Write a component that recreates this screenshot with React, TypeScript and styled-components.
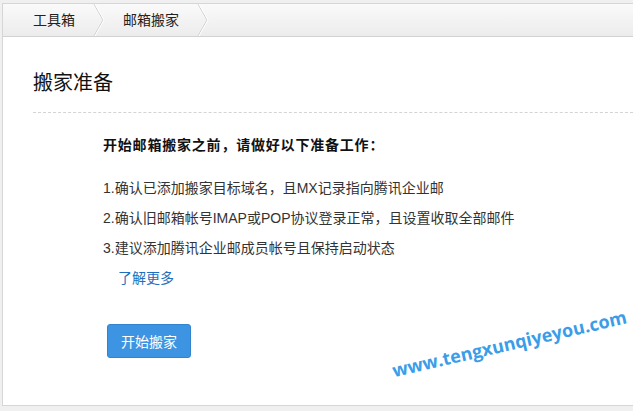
import React from 'react';
import styled, { createGlobalStyle } from 'styled-components';

const GlobalStyle = createGlobalStyle`
  html, body {
    margin: 0;
    padding: 0;
    background: #f0f0f0;
    font-family: "Liberation Sans", "Noto Sans CJK SC", sans-serif;
    color: #333;
  }
`;

const Frame = styled.div`
  position: relative;
  margin: 3px 0 0 2px;
  height: 401px;
  background: #fff;
  border: 1px solid #d6d6d6;
  border-right: none;
  overflow: hidden;
`;

const Crumbs = styled.div`
  display: flex;
  align-items: center;
  height: 32px;
  padding-left: 30px;
  background: linear-gradient(#fafafa, #ececec);
  border-bottom: 1px solid #d2d2d2;
`;

const Crumb = styled.span`
  font-size: 14px;
  color: #222;
  line-height: 32px;
`;

const Chevron = styled.svg`
  display: block;
  width: 12px;
  height: 32px;
  margin: 0 18px 0 18px;
`;

const Body = styled.div`
  padding: 0 0 0 30px;
`;

const Title = styled.h2`
  margin: 0;
  padding: 32px 0 0;
  height: 43px;
  font-size: 20px;
  font-weight: normal;
  color: #111;
  line-height: 28px;
  border-bottom: 1px dashed #d4d4d4;
`;

const Steps = styled.div`
  padding: 20px 0 0 70px;
`;

const Lead = styled.p`
  margin: 0 0 16px;
  font-size: 14px;
  font-weight: bold;
  letter-spacing: 0.8px;
  line-height: 24px;
  color: #111;
`;

const Item = styled.p`
  margin: 0;
  font-size: 14px;
  line-height: 30px;
  color: #333;
`;

const More = styled.a`
  display: block;
  padding-left: 15px;
  font-size: 14px;
  line-height: 30px;
  color: #1d6fc0;
  text-decoration: none;
`;

const StartButton = styled.button`
  display: block;
  margin: 31px 0 0 4px;
  width: 84px;
  height: 34px;
  padding: 0;
  background: #3d94e2;
  border: 1px solid #3384cf;
  border-radius: 3px;
  color: #fff;
  font-family: "Liberation Sans", "Noto Sans CJK SC", sans-serif;
  font-size: 14px;
`;

const Watermark = styled.div`
  position: absolute;
  left: 392px;
  top: 354px;
  font-family: "Open Sans", "Liberation Sans", sans-serif;
  font-weight: 700;
  font-size: 18px;
  color: #3a9de8;
  transform: rotate(-13deg);
  transform-origin: left bottom;
  white-space: nowrap;
`;

const Sep = () => (
  <Chevron viewBox="0 0 12 32">
    <path d="M1 0 L10 16 L1 32" fill="none" stroke="#cfcfcf" strokeWidth="1" />
    <path d="M2 0 L11 16 L2 32" fill="none" stroke="#ffffff" strokeWidth="1" />
  </Chevron>
);

const App: React.FC = () => (
  <>
    <GlobalStyle />
    <Frame>
      <Crumbs>
        <Crumb>工具箱</Crumb>
        <Sep />
        <Crumb>邮箱搬家</Crumb>
        <Sep />
      </Crumbs>
      <Body>
        <Title>搬家准备</Title>
        <Steps>
          <Lead>开始邮箱搬家之前，请做好以下准备工作：</Lead>
          <Item>1.确认已添加搬家目标域名，且MX记录指向腾讯企业邮</Item>
          <Item>2.确认旧邮箱帐号IMAP或POP协议登录正常，且设置收取全部邮件</Item>
          <Item>3.建议添加腾讯企业邮成员帐号且保持启动状态</Item>
          <More href="#">了解更多</More>
          <StartButton>开始搬家</StartButton>
        </Steps>
      </Body>
      <Watermark>www.tengxunqiyeyou.com</Watermark>
    </Frame>
  </>
);

export default App;
